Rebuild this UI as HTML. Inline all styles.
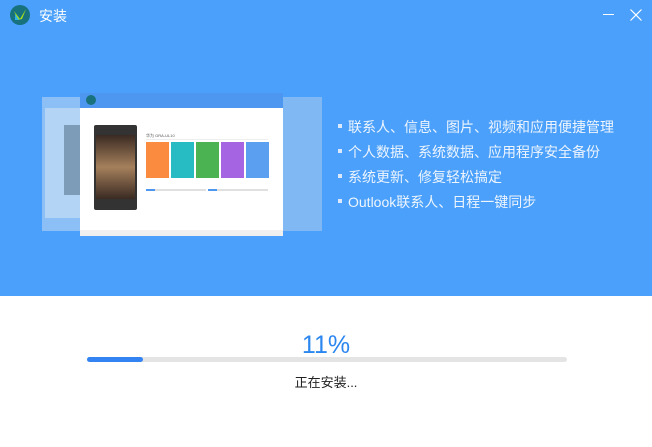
<!DOCTYPE html>
<html><head><meta charset="utf-8"><style>
*{margin:0;padding:0;box-sizing:border-box}
body{width:652px;height:447px;overflow:hidden;background:#fff;font-family:"Liberation Sans","Noto Sans CJK SC",sans-serif;position:relative}
.top{position:absolute;left:0;top:0;width:652px;height:296px;background:#4aa0fa}
.abs{position:absolute}
.feat{position:absolute;left:338px;color:#eef5ff;font-size:14px;line-height:16px;white-space:nowrap}
.feat:before{content:"";display:inline-block;width:4px;height:4px;background:#dbe9fb;margin-right:6px;vertical-align:middle;position:relative;top:-2px}
.tile{position:absolute;top:49px;width:23px;height:36px}
</style></head><body>
<div class="top"></div>
<svg class="abs" style="left:10px;top:5px" width="20" height="20" viewBox="0 0 20 20"><circle cx="10" cy="10" r="10" fill="#17727e"/><path d="M4 6 L10 14 L16 4 L12 14 L8 15 Z" fill="#a8e01a"/><path d="M5 9 L9 15 L5 15Z" fill="#2bb3e8"/></svg>
<div class="abs" style="left:39px;top:6px;color:#fff;font-size:14px">安装</div>
<div class="abs" style="left:603px;top:14px;width:11px;height:1px;background:#fff"></div>
<svg class="abs" style="left:630px;top:9px" width="12" height="12"><path d="M0.5 0.5L11.5 11.5M11.5 0.5L0.5 11.5" stroke="#fff" stroke-width="1.2"/></svg>
<div class="abs" style="left:42px;top:97px;width:40px;height:134px;background:#8cbff5"></div>
<div class="abs" style="left:45px;top:108px;width:35px;height:110px;background:#b3d4f5"></div>
<div class="abs" style="left:64px;top:125px;width:16px;height:70px;background:#7d9cb8"></div>
<div class="abs" style="left:282px;top:97px;width:40px;height:134px;background:#80b8f3"></div>
<div class="abs" style="left:80px;top:93px;width:203px;height:143px;background:#fff;overflow:hidden">
 <div class="abs" style="left:0;top:0;width:203px;height:15px;background:#4d97f0"></div>
 <div class="abs" style="left:6px;top:2px;width:10px;height:10px;border-radius:50%;background:#17727e"></div>
 <div class="abs" style="left:14px;top:32px;width:43px;height:85px;background:#333;border-radius:2px"></div>
 <div class="abs" style="left:16px;top:42px;width:39px;height:64px;background:linear-gradient(#3a2a22,#a5805c 50%,#3a2a22)"></div>
 <div class="abs" style="left:66px;top:40px;font-size:4px;color:#555">华为 GRA-UL10</div>
 <div class="abs" style="left:66px;top:46px;width:122px;height:1px;background:#eee"></div>
 <div class="tile" style="left:66px;background:#fb8b3e"></div>
 <div class="tile" style="left:91px;background:#27bcc3"></div>
 <div class="tile" style="left:116px;background:#4cb352"></div>
 <div class="tile" style="left:141px;background:#a565e3"></div>
 <div class="tile" style="left:166px;background:#5a9ff0"></div>
 <div class="abs" style="left:66px;top:96px;width:60px;height:2px;background:#e0e0e0"></div>
 <div class="abs" style="left:66px;top:96px;width:9px;height:2px;background:#4d97f0"></div>
 <div class="abs" style="left:128px;top:96px;width:60px;height:2px;background:#e0e0e0"></div>
 <div class="abs" style="left:128px;top:96px;width:9px;height:2px;background:#4d97f0"></div>
 <div class="abs" style="left:0;top:137px;width:203px;height:6px;background:#f0f0f0"></div>
</div>
<div class="feat" style="top:119px">联系人、信息、图片、视频和应用便捷管理</div>
<div class="feat" style="top:144px">个人数据、系统数据、应用程序安全备份</div>
<div class="feat" style="top:169px">系统更新、修复轻松搞定</div>
<div class="feat" style="top:194px">Outlook联系人、日程一键同步</div>
<div class="abs" style="left:0;top:331px;width:652px;text-align:center;color:#2b86f0;font-size:25px;line-height:28px">11%</div>
<div class="abs" style="left:87px;top:357px;width:480px;height:5px;background:#e4e4e4;border-radius:3px"></div>
<div class="abs" style="left:87px;top:357px;width:56px;height:5px;background:#3383f3;border-radius:3px"></div>
<div class="abs" style="left:0;top:374px;width:652px;text-align:center;color:#222;font-size:13px;line-height:18px">正在安装...</div>
</body></html>
